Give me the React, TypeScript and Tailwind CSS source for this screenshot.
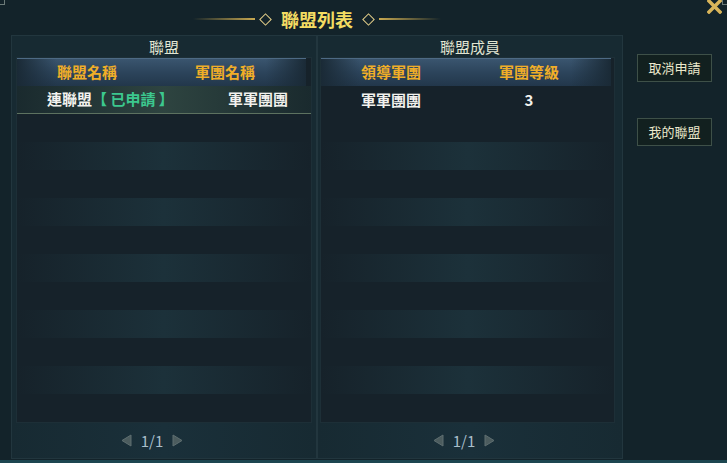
import React from "react"

const font = { fontFamily: '"Noto Sans CJK TC", "Noto Sans", sans-serif' }

function Stripe({ on }: { on: boolean }) {
  return (
    <div className="h-[28px] w-full">
      {on && (
        <div className="h-full w-full bg-gradient-to-r from-transparent via-[#1c313a] to-transparent" />
      )}
    </div>
  )
}

function Pager({ shift }: { shift: string }) {
  return (
    <div className={`flex flex-1 items-center justify-center gap-[9px] bg-gradient-to-r from-transparent via-[#1a303a] to-transparent ${shift}`}>
      <svg width="11" height="13" viewBox="0 0 11 13">
        <path d="M10 1 L1 6.5 L10 12 Z" fill="#4c5c5e" stroke="#5e6e70" strokeWidth="1" />
      </svg>
      <span className="text-[15px] leading-none text-[#a9bfca]">1/1</span>
      <svg width="11" height="13" viewBox="0 0 11 13">
        <path d="M1 1 L10 6.5 L1 12 Z" fill="#4c5c5e" stroke="#5e6e70" strokeWidth="1" />
      </svg>
    </div>
  )
}

function HeaderBand({ a, b }: { a: string; b: string }) {
  return (
    <div className="relative flex h-[28px] items-center border-t border-[#4d6a84] bg-gradient-to-b from-[#3a556f] via-[#2c445b] to-[#22374b] text-[15px] font-bold text-[#f0ae28]">
      <div className="absolute inset-y-0 left-0 w-[40px] bg-gradient-to-r from-[#1a2a36] to-transparent" />
      <div className="absolute inset-y-0 right-0 w-[40px] bg-gradient-to-l from-[#1a2a36] to-transparent" />
      <div className="relative w-[140px] text-center">{a}</div>
      <div className="relative w-[136px] text-center">{b}</div>
    </div>
  )
}

function Button({ label }: { label: string }) {
  return (
    <div className="flex h-[28px] w-[75px] items-center justify-center border border-[#3e5048] bg-[#12201f] text-[13px] text-[#ece8cc]">
      {label}
    </div>
  )
}

export default function App() {
  const rows = Array.from({ length: 11 }, (_, i) => i % 2 === 1)

  return (
    <div
      style={font}
      className="relative flex h-[463px] w-[727px] flex-col overflow-hidden bg-[#13232a] border-b-[3px] border-[#1d4650]"
    >
      {/* corners */}
      <div className="absolute left-0 top-0 h-[5px] w-[5px] border-b border-r border-[#6c7a78]" />
      <div className="absolute right-0 top-0 h-[5px] w-[5px] border-b border-l border-[#6c7a78]" />
      {/* close */}
      <svg className="absolute right-[5px] top-0" width="15" height="14" viewBox="0 0 15 14">
        <path d="M2 1 L13 12 M13 1 L2 12" stroke="#d9b55a" strokeWidth="3.5" strokeLinecap="square" />
      </svg>

      {/* title */}
      <div className="ml-[11px] flex h-[35px] w-[612px] items-center justify-center pt-[3px]">
        <div className="h-[2px] w-[62px] bg-gradient-to-r from-transparent to-[#c8a850]" />
        <div className="mx-[6px] h-[9px] w-[9px] rotate-45 border border-[#e6d08a]" />
        <div className="mx-[5px] text-[18px] font-bold leading-none text-[#f3dc62]">聯盟列表</div>
        <div className="mx-[6px] h-[9px] w-[9px] rotate-45 border border-[#e6d08a]" />
        <div className="h-[2px] w-[62px] bg-gradient-to-l from-transparent to-[#c8a850]" />
      </div>

      <div className="flex pl-[11px]">
        {/* left panel */}
        <div className="flex h-[424px] w-[306px] flex-col border border-[#22363e] bg-[#172a32]">
          <div className="flex h-[21px] items-center justify-center pt-[2px] text-[15px] text-[#e2e6d2]">聯盟</div>
          <div className="ml-[4px] w-[296px] border border-[#1d2f37] bg-[#16222a]">
            <div className="mr-[5px]">
              <HeaderBand a="聯盟名稱" b="軍團名稱" />
            </div>
            <div className="flex h-[28px] items-center border-b border-[#5d7260] bg-gradient-to-r from-[#1a2a2e] via-[#2e4440] to-[#1a2a2e] text-[15px] font-bold">
              <div className="w-[170px] pl-[30px] text-[#f2f2ee]">
                連聯盟<span className="text-[#3cc88e]">【 已申請 】</span>
              </div>
              <div className="w-[101px] text-right text-[#f2f2ee]">軍軍團團</div>
            </div>
            {rows.map((on, i) => (
              <Stripe key={i} on={on} />
            ))}
          </div>
          <Pager shift="pr-[24px]" />
        </div>

        {/* right panel */}
        <div className="flex h-[424px] w-[306px] flex-col border border-[#22363e] bg-[#172a32]">
          <div className="flex h-[21px] items-center justify-center pt-[2px] text-[15px] text-[#e2e6d2]">聯盟成員</div>
          <div className="ml-[2px] w-[295px] border border-[#1d2f37] bg-[#16222a]">
            <div className="mr-[3px]">
              <HeaderBand a="領導軍團" b="軍團等級" />
            </div>
            <div className="flex h-[28px] items-center text-[15px] font-bold text-[#f2f2ee]">
              <div className="w-[140px] text-center">軍軍團團</div>
              <div className="w-[136px] text-center">3</div>
            </div>
            {rows.map((on, i) => (
              <Stripe key={i} on={on} />
            ))}
          </div>
          <Pager shift="pr-[12px]" />
        </div>

        {/* buttons */}
        <div className="ml-[14px] flex flex-col gap-[36px] pt-[19px]">
          <Button label="取消申請" />
          <Button label="我的聯盟" />
        </div>
      </div>
    </div>
  )
}
